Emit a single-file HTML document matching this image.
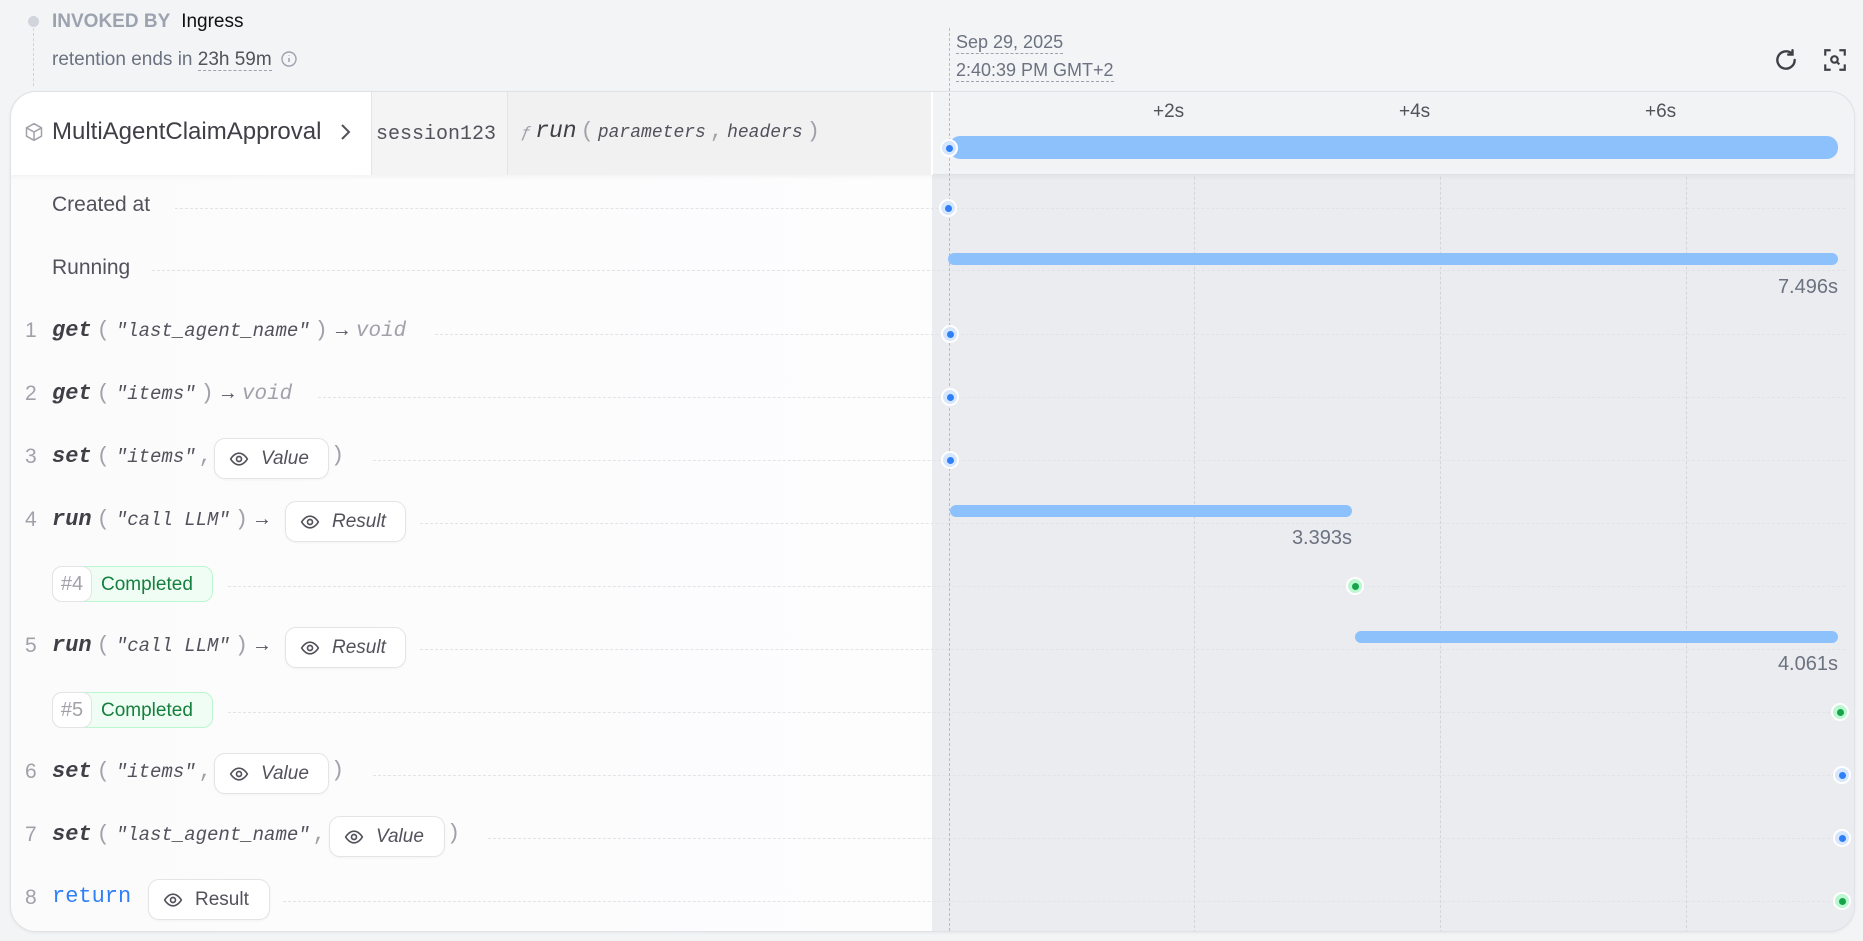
<!DOCTYPE html>
<html><head><meta charset="utf-8"><style>
*{box-sizing:border-box;margin:0;padding:0}
body{width:1863px;height:941px;background:#f3f4f6;font-family:"Liberation Sans",sans-serif;color:#3f3f46;position:relative;overflow:hidden}
.a{position:absolute;white-space:nowrap}
.mono{font-family:"Liberation Mono",monospace;font-style:italic}
.fn{font-size:22px;color:#3f3f46;font-weight:bold}
.arg{font-size:19px;color:#52525b}
.par{font-size:22px;color:#a1a1aa;font-style:normal;margin:0 6px 0 5px}
.arr{font-style:normal;color:#52525b;font-size:20px;margin:0 8px 0 2px}
.num{font-size:21px;color:#a1a1aa}
.pill{position:absolute;height:41px;border:1px solid #e4e4e7;background:#fff;border-radius:11px;font-size:19px;color:#52525b;font-style:italic;display:flex;align-items:center;padding-left:14px;gap:12px;box-shadow:0 1px 2px rgba(0,0,0,.04)}
.dl{position:absolute;height:0;border-top:1px dashed #e2e3e7}
.dot{position:absolute;width:18px;height:18px;border-radius:50%;background:#d6e6fd;border:2px solid #fff;margin:-9px 0 0 -9px;z-index:4}
.dot::after{content:"";position:absolute;left:3.5px;top:3.5px;width:7px;height:7px;border-radius:50%;background:#2f7ff7}
.dot.g{background:#bbf7d0}.dot.g::after{background:#16a34a}
.bar{position:absolute;height:12px;border-radius:6px;background:#8dc1fb}
.dur{position:absolute;font-size:20px;color:#6b7280;text-align:right}
.comp{position:absolute;left:52px;height:36px;width:161px;border:1px solid #bbf7d0;background:#f0fdf4;border-radius:10px;font-size:19px;color:#15803d}
.comp span.h{position:absolute;left:-1px;top:-1px;height:36px;width:40px;border:1px solid #e4e4e7;background:#fff;border-radius:10px;color:#a1a1aa;font-size:20px;text-align:center;line-height:34px}
.comp span.t{position:absolute;left:48px;top:7px}
</style></head><body>
<div class="a" style="left:28px;top:16px;width:11px;height:11px;border-radius:50%;background:#d1d5db"></div>
<div class="a" style="left:33px;top:28px;height:58px;border-left:1px dashed #d1d5db"></div>
<div class="a" style="left:52px;top:11px;font-size:19px;color:#9ca3af;font-weight:bold">INVOKED BY <span style="color:#111;font-weight:normal;margin-left:6px">Ingress</span></div>
<div class="a" style="left:52px;top:49px;font-size:19px;color:#6b7280">retention ends in <span style="color:#52525b;border-bottom:1px dashed #9ca3af">23h 59m</span> <svg width="18" height="18" viewBox="0 0 18 18" style="vertical-align:-3px;margin-left:3px"><circle cx="9" cy="9" r="7" fill="none" stroke="#9ca3af" stroke-width="1.4"/><path d="M9 8v4M9 5.5v.5" stroke="#9ca3af" stroke-width="1.5"/></svg></div>
<div class="a" style="left:949px;top:28px;height:903px;border-left:1px dashed #b8bcc4;z-index:3"></div>
<div class="a" style="left:956px;top:31px;font-size:18px;color:#6b7280;border-bottom:1px dashed #9ca3af;line-height:22px">Sep 29, 2025</div>
<div class="a" style="left:956px;top:59px;font-size:18px;color:#6b7280;border-bottom:1px dashed #9ca3af;line-height:22px">2:40:39 PM GMT+2</div>
<svg class="a" style="left:1773px;top:47px" width="26" height="26" viewBox="0 0 24 24"><path d="M20 12a8 8 0 1 1-2.5-5.8M18 3v4h-4" fill="none" stroke="#3f3f46" stroke-width="2.2" stroke-linecap="round"/></svg>
<svg class="a" style="left:1822px;top:47px" width="26" height="26" viewBox="0 0 24 24"><path d="M3 8V3h5M16 3h5v5M21 16v5h-5M8 21H3v-5" fill="none" stroke="#3f3f46" stroke-width="2"/><circle cx="11.5" cy="11.5" r="3" fill="none" stroke="#3f3f46" stroke-width="2"/><path d="M14 14l2 2" stroke="#3f3f46" stroke-width="2"/></svg>
<div class="a" style="left:10px;top:91px;width:1845px;height:841px;border-radius:26px;background:#ebecf0;border:1px solid #e1e2e6;overflow:hidden;box-shadow:0 1px 3px rgba(0,0,0,.06)">
 <div class="a" style="left:0;top:0;width:921px;height:841px;background:linear-gradient(90deg,#fbfbfc,#fdfdfe)"></div>
 <div class="a" style="left:1183px;top:0;height:841px;border-left:1px dashed #d3d5db"></div>
 <div class="a" style="left:1429px;top:0;height:841px;border-left:1px dashed #d3d5db"></div>
 <div class="a" style="left:1675px;top:0;height:841px;border-left:1px dashed #d3d5db"></div>
 <div class="a" style="left:0;top:0;width:1845px;height:83px;background:#f2f3f5;border-bottom:1px solid #e1e2e6;border-radius:26px 26px 0 0;box-shadow:0 2px 4px rgba(0,0,0,.04)"></div>
 <div class="a" style="left:0;top:0;width:360px;height:83px;background:#fff;border-radius:26px 0 0 0"></div>
 <div class="a" style="left:360px;top:0;width:560px;height:83px;background:#f4f4f5;border-left:1px solid #e4e4e7"></div>
 <div class="a" style="left:496px;top:0;width:424px;height:83px;background:#f1f1f2;border-left:1px solid #e4e4e7"></div>
 <div class="a" style="left:920px;top:0;height:83px;border-left:2px solid #fff"></div>
</div>
<svg class="a" style="left:24px;top:122px" width="20" height="20" viewBox="0 0 24 24"><path d="M12 2l9 5v10l-9 5-9-5V7z M3 7l9 5 9-5 M12 12v10" fill="none" stroke="#a1a1aa" stroke-width="1.8" stroke-linejoin="round"/></svg>
<div class="a" style="left:52px;top:118px;font-size:24px;color:#3f3f46">MultiAgentClaimApproval</div>
<svg class="a" style="left:338px;top:121px" width="16" height="22" viewBox="0 0 16 22"><path d="M4 4l7 7-7 7" fill="none" stroke="#52525b" stroke-width="2"/></svg>
<div class="a" style="left:376px;top:123px;font-family:'Liberation Mono',monospace;font-size:20px;color:#52525b">session123</div>
<div class="a mono" style="left:521px;top:118px"><span style="font-size:17px;color:#a1a1aa">ƒ</span><span class="fn" style="font-weight:normal;font-size:23px;margin-left:4px">run</span><span class="par" style="margin:0 4px">(</span><span class="arg" style="font-size:18px">parameters</span><span class="par" style="margin:0 4px">,</span><span class="arg" style="font-size:18px">headers</span><span class="par" style="margin:0 4px">)</span></div>
<div class="a" style="left:1153px;top:101px;font-size:19px;color:#52525b">+2s</div>
<div class="a" style="left:1399px;top:101px;font-size:19px;color:#52525b">+4s</div>
<div class="a" style="left:1645px;top:101px;font-size:19px;color:#52525b">+6s</div>
<div class="bar" style="left:949px;top:136px;width:889px;height:23px;border-radius:11px"></div>
<div class="dot" style="left:949px;top:148px"></div>

<div class="dl" style="left:175px;top:208px;width:1670px"></div>
<div class="dl" style="left:152px;top:270px;width:1693px"></div>
<div class="dl" style="left:435px;top:334px;width:1410px"></div>
<div class="dl" style="left:318px;top:397px;width:1527px"></div>
<div class="dl" style="left:373px;top:460px;width:1472px"></div>
<div class="dl" style="left:420px;top:523px;width:1425px"></div>
<div class="dl" style="left:228px;top:586px;width:1617px"></div>
<div class="dl" style="left:420px;top:649px;width:1425px"></div>
<div class="dl" style="left:228px;top:712px;width:1617px"></div>
<div class="dl" style="left:373px;top:775px;width:1472px"></div>
<div class="dl" style="left:488px;top:838px;width:1357px"></div>
<div class="dl" style="left:283px;top:901px;width:1562px"></div>

<div class="a" style="left:52px;top:193px;font-size:21px;color:#52525b">Created at</div>
<div class="a" style="left:52px;top:256px;font-size:21px;color:#52525b">Running</div>

<div class="a num" style="left:25px;top:319px">1</div>
<div class="a mono" style="left:52px;top:318px"><span class="fn">get</span><span class="par">(</span><span class="arg">"last_agent_name"</span><span class="par">)</span><span class="arr">→</span><span style="font-size:21px;color:#a1a1aa">void</span></div>
<div class="a num" style="left:25px;top:382px">2</div>
<div class="a mono" style="left:52px;top:381px"><span class="fn">get</span><span class="par">(</span><span class="arg">"items"</span><span class="par">)</span><span class="arr">→</span><span style="font-size:21px;color:#a1a1aa">void</span></div>
<div class="a num" style="left:25px;top:445px">3</div>
<div class="a mono" style="left:52px;top:444px"><span class="fn">set</span><span class="par">(</span><span class="arg">"items"</span><span class="par" style="margin:0 3px">,</span></div>
<div class="pill" style="left:214px;top:438px;width:115px"><svg width="20" height="20" viewBox="0 0 24 24"><path d="M2 12s4-7 10-7 10 7 10 7-4 7-10 7S2 12 2 12z" fill="none" stroke="#52525b" stroke-width="2"/><circle cx="12" cy="12" r="3" fill="none" stroke="#52525b" stroke-width="2"/></svg>Value</div>
<div class="a mono" style="left:331px;top:443px;font-size:22px;color:#a1a1aa;font-style:normal">)</div>
<div class="a num" style="left:25px;top:508px">4</div>
<div class="a mono" style="left:52px;top:507px"><span class="fn">run</span><span class="par">(</span><span class="arg">"call LLM"</span><span class="par">)</span><span class="arr">→</span></div>
<div class="pill" style="left:285px;top:501px;width:121px"><svg width="20" height="20" viewBox="0 0 24 24"><path d="M2 12s4-7 10-7 10 7 10 7-4 7-10 7S2 12 2 12z" fill="none" stroke="#52525b" stroke-width="2"/><circle cx="12" cy="12" r="3" fill="none" stroke="#52525b" stroke-width="2"/></svg>Result</div>
<div class="comp" style="top:566px"><span class="h">#4</span><span class="t">Completed</span></div>
<div class="a num" style="left:25px;top:634px">5</div>
<div class="a mono" style="left:52px;top:633px"><span class="fn">run</span><span class="par">(</span><span class="arg">"call LLM"</span><span class="par">)</span><span class="arr">→</span></div>
<div class="pill" style="left:285px;top:627px;width:121px"><svg width="20" height="20" viewBox="0 0 24 24"><path d="M2 12s4-7 10-7 10 7 10 7-4 7-10 7S2 12 2 12z" fill="none" stroke="#52525b" stroke-width="2"/><circle cx="12" cy="12" r="3" fill="none" stroke="#52525b" stroke-width="2"/></svg>Result</div>
<div class="comp" style="top:692px"><span class="h">#5</span><span class="t">Completed</span></div>
<div class="a num" style="left:25px;top:760px">6</div>
<div class="a mono" style="left:52px;top:759px"><span class="fn">set</span><span class="par">(</span><span class="arg">"items"</span><span class="par" style="margin:0 3px">,</span></div>
<div class="pill" style="left:214px;top:753px;width:115px"><svg width="20" height="20" viewBox="0 0 24 24"><path d="M2 12s4-7 10-7 10 7 10 7-4 7-10 7S2 12 2 12z" fill="none" stroke="#52525b" stroke-width="2"/><circle cx="12" cy="12" r="3" fill="none" stroke="#52525b" stroke-width="2"/></svg>Value</div>
<div class="a mono" style="left:331px;top:758px;font-size:22px;color:#a1a1aa;font-style:normal">)</div>
<div class="a num" style="left:25px;top:823px">7</div>
<div class="a mono" style="left:52px;top:822px"><span class="fn">set</span><span class="par">(</span><span class="arg">"last_agent_name"</span><span class="par" style="margin:0 3px">,</span></div>
<div class="pill" style="left:329px;top:816px;width:116px"><svg width="20" height="20" viewBox="0 0 24 24"><path d="M2 12s4-7 10-7 10 7 10 7-4 7-10 7S2 12 2 12z" fill="none" stroke="#52525b" stroke-width="2"/><circle cx="12" cy="12" r="3" fill="none" stroke="#52525b" stroke-width="2"/></svg>Value</div>
<div class="a mono" style="left:447px;top:821px;font-size:22px;color:#a1a1aa;font-style:normal">)</div>
<div class="a num" style="left:25px;top:886px">8</div>
<div class="a" style="left:52px;top:884px;font-family:'Liberation Mono',monospace;font-size:22px;color:#2f7ff7">return</div>
<div class="pill" style="left:148px;top:879px;width:122px;font-style:normal"><svg width="20" height="20" viewBox="0 0 24 24"><path d="M2 12s4-7 10-7 10 7 10 7-4 7-10 7S2 12 2 12z" fill="none" stroke="#52525b" stroke-width="2"/><circle cx="12" cy="12" r="3" fill="none" stroke="#52525b" stroke-width="2"/></svg>Result</div>

<div class="dot" style="left:948px;top:208px"></div>
<div class="bar" style="left:948px;top:253px;width:890px"></div>
<div class="dur" style="left:1700px;top:276px;width:138px">7.496s</div>
<div class="dot" style="left:950px;top:334px"></div>
<div class="dot" style="left:950px;top:397px"></div>
<div class="dot" style="left:950px;top:460px"></div>
<div class="bar" style="left:950px;top:505px;width:402px"></div>
<div class="dur" style="left:1200px;top:527px;width:152px">3.393s</div>
<div class="dot g" style="left:1355px;top:586px"></div>
<div class="bar" style="left:1355px;top:631px;width:483px"></div>
<div class="dur" style="left:1700px;top:653px;width:138px">4.061s</div>
<div class="dot g" style="left:1840px;top:712px"></div>
<div class="dot" style="left:1842px;top:775px"></div>
<div class="dot" style="left:1842px;top:838px"></div>
<div class="dot g" style="left:1842px;top:901px"></div>
</body></html>
